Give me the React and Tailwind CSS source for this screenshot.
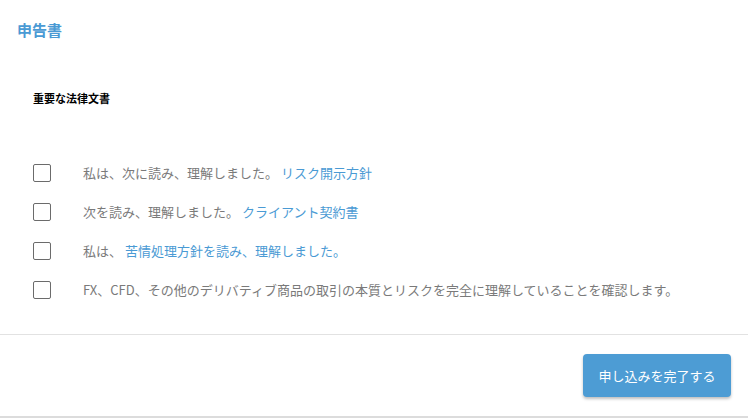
export default function App() {
  const rows = [
    { pre: '私は、次に読み、理解しました。 ', link: 'リスク開示方針', post: '' },
    { pre: '次を読み、理解しました。 ', link: 'クライアント契約書', post: '' },
    { pre: '私は、 ', link: '苦情処理方針を読み、理解しました。', post: '' },
    { pre: 'FX、CFD、その他のデリバティブ商品の取引の本質とリスクを完全に理解していることを確認します。', link: '', post: '' },
  ]

  return (
    <div className="w-[748px] h-[418px] bg-white flex flex-col font-['Noto_Sans_CJK_JP',sans-serif]">
      <div className="h-[60px] px-[17px] flex items-center">
        <h1 className="text-[15px] leading-[20px] font-bold text-[#4a9ad4]">申告書</h1>
      </div>

      <p className="mt-[30px] px-[33px] text-[11px] leading-[16px] font-bold text-black">重要な法律文書</p>

      <div className="mt-[47px] px-[33px] flex flex-col">
        {rows.map((r, i) => (
          <label key={i} className="h-[39px] flex items-center gap-[32px]">
            <span className="w-[18px] h-[18px] border border-[#6b6b6b] rounded-[2px] shrink-0" />
            <span className="text-[13px] leading-[18px] text-[#7a7a7a]">
              {r.pre}
              {r.link && <span className="text-[#4a9ad4]">{r.link}</span>}
            </span>
          </label>
        ))}
      </div>

      <div className="mt-[25px] border-t border-[#e2e2e2]" />

      <div className="flex justify-end pt-[19px] pb-[19px] pr-[17px] border-b-2 border-[#dcdcdc]">
        <button className="w-[148px] h-[43px] rounded-[4px] bg-[#4d9cd4] text-white text-[13px] shadow-[0_2px_3px_rgba(0,0,0,0.25)]">
          申し込みを完了する
        </button>
      </div>
    </div>
  )
}
